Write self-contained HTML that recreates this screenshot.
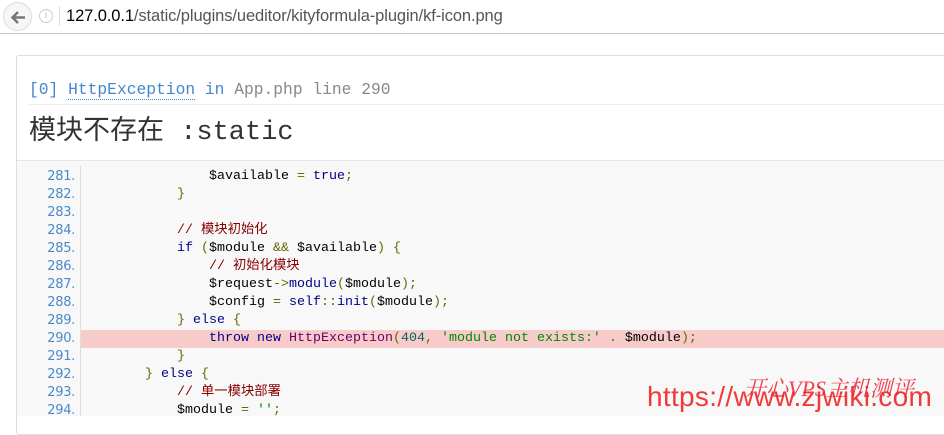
<!DOCTYPE html>
<html><head><meta charset="utf-8"><style>
*{margin:0;padding:0;box-sizing:border-box}
body{width:944px;height:416px;overflow:hidden;background:#fff;font-family:"Liberation Sans","Noto Sans CJK SC",sans-serif;position:relative}
.bar{position:absolute;left:0;top:0;width:944px;height:34px;background:#fff;border-bottom:1px solid #c8c8c8}
.back{position:absolute;left:3px;top:2px;width:29px;height:29px;border-radius:50%;border:1px solid #ddd;background:#f6f6f6}
.info{position:absolute;left:39px;top:9px;width:14px;height:14px;border-radius:50%;border:1px solid #ccc;color:#bbb;font-size:10px;text-align:center;line-height:12px}
.sep{position:absolute;left:59px;top:6px;width:1px;height:20px;background:#ddd}
.url{position:absolute;left:66px;top:7px;font-size:16.5px;color:#555;letter-spacing:-0.1px}
.url b{color:#000;font-weight:normal}
.card{position:absolute;left:16px;top:55px;width:940px;height:380px;border:1px solid #ddd;border-radius:3px}
.h2{position:absolute;left:29px;top:80px;font-family:"Liberation Mono",monospace;font-size:16.3px;color:#888}
.h2 .b{color:#4288ce}
.h2 a{color:#4288ce;text-decoration:none;border-bottom:1px dotted #4288ce}
.hr{position:absolute;left:29px;top:104px;width:915px;height:1px;background:#eee}
.h1{position:absolute;left:29px;top:108px;font-family:"Liberation Mono","Noto Sans CJK SC",monospace;font-size:27px;color:#333}
.code{position:absolute;left:17px;top:160px;width:927px;height:256px;background:#f8f8f8;border-top:1px solid #e6e6e6}
.ln{position:absolute;left:17px;top:168px;width:58px;text-align:right;font-size:13px;color:#4a8acb;line-height:18px;font-family:"DejaVu Sans","Liberation Sans",sans-serif;letter-spacing:-0.3px}
.vl{position:absolute;left:80px;top:166px;width:1px;height:250px;background:#ddd}
.src{position:absolute;left:81px;top:168px;width:863px;font-family:"Liberation Mono","Noto Sans CJK SC",monospace;font-size:13.33px;line-height:18px;white-space:pre;color:#000}
.src div{height:18px}
.hl{background:#f8cbcb}
.k{color:#000088}.p{color:#666600}.s{color:#008800}.c{color:#880000}.n{color:#006666}.t{color:#660066}
.wm{position:absolute;left:647px;top:381px;font-size:28px;color:#f03a3a;font-family:"Liberation Sans",sans-serif;letter-spacing:0.3px}
.wm2{position:absolute;left:744px;top:372px;font-size:22px;color:#e23;font-style:italic;font-family:"Liberation Serif","Noto Serif CJK SC",serif;opacity:.85}
</style></head><body>
<div class="bar"><div class="back"><svg width="29" height="29" viewBox="0 0 29 29"><path d="M21 14.5H9M14 9l-5.5 5.5L14 20" stroke="#777" stroke-width="2.5" fill="none"/></svg></div><div class="info">i</div><div class="sep"></div>
<div class="url"><b>127.0.0.1</b>/static/plugins/ueditor/kityformula-plugin/kf-icon.png</div></div>
<div class="card"></div>
<div class="h2"><span class="b">[0]</span> <a>HttpException</a> <span class="b">in</span> App.php line 290</div>
<div class="hr"></div>
<div class="h1">模块不存在 :static</div>
<div class="code"></div>
<div class="ln">281.<br>282.<br>283.<br>284.<br>285.<br>286.<br>287.<br>288.<br>289.<br>290.<br>291.<br>292.<br>293.<br>294.</div>
<div class="vl"></div>
<div class="src"><div>                <span>$available</span> <span class="p">=</span> <span class="k">true</span><span class="p">;</span></div><div>            <span class="p">}</span></div><div> </div><div>            <span class="c">// 模块初始化</span></div><div>            <span class="k">if</span> <span class="p">(</span>$module <span class="p">&amp;&amp;</span> $available<span class="p">)</span> <span class="p">{</span></div><div>                <span class="c">// 初始化模块</span></div><div>                $request<span class="p">-&gt;</span><span class="k">module</span><span class="p">(</span>$module<span class="p">);</span></div><div>                $config <span class="p">=</span> <span class="k">self</span><span class="p">::</span><span class="k">init</span><span class="p">(</span>$module<span class="p">);</span></div><div>            <span class="p">}</span> <span class="k">else</span> <span class="p">{</span></div><div class="hl">                <span class="k">throw</span> <span class="k">new</span> <span class="t">HttpException</span><span class="p">(</span><span class="n">404</span><span class="p">,</span> <span class="s">'module not exists:'</span> <span class="p">.</span> $module<span class="p">);</span></div><div>            <span class="p">}</span></div><div>        <span class="p">}</span> <span class="k">else</span> <span class="p">{</span></div><div>            <span class="c">// 单一模块部署</span></div><div>            $module <span class="p">=</span> <span class="s">''</span><span class="p">;</span></div></div>
<div class="wm">https://www.zjwiki.com</div>
<div class="wm2">开心VPS主机测评</div>
</body></html>
